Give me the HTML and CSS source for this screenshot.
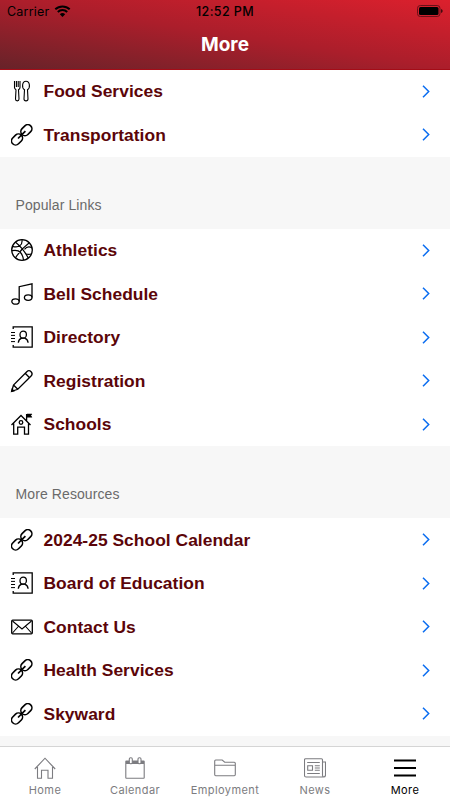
FILE: index.html
```html
<!DOCTYPE html>
<html lang="en">
<head>
    <meta charset="UTF-8">
    <meta name="viewport" content="width=device-width, initial-scale=1.0">
    <title>More</title>
    <link rel="stylesheet" href="styles.css">
</head>
<body>
    <!-- shared icons -->
    <svg class="sprite" aria-hidden="true">
        <symbol id="link" viewBox="0 0 22 22">
            <g transform="rotate(-45 10.700 10.800)" stroke-width="1.600">
                <rect x="-2" y="6.700" width="12.200" height="8.200" rx="4.100"/>
                <rect x="11.200" y="6.700" width="12.200" height="8.200" rx="4.100"/>
                <path d="M5.500 10.800h10.400" stroke-width="1.700"/>
            </g>
        </symbol>
        <symbol id="contact" viewBox="0 0 22 22">
            <path d="M2.200 3V.8h19v20.400h-19V19"/>
            <path d="M0 6.500h4M0 9.400h4M0 12.500h4M0 15.600h4" stroke-width="1"/>
            <ellipse cx="12.200" cy="8.700" rx="3.200" ry="3.500"/>
            <path d="M7.300 16.800c.3-3 1.500-4 3.400-4.600h3c1.900.6 3.100 1.600 3.400 4.600"/>
        </symbol>
        <symbol id="chevron" viewBox="0 0 8 13">
            <path d="M1 .8l5.700 5.700L1 12.200"/>
        </symbol>
    </svg>

    <header class="header">
        <div class="status">
            <div class="carrier">
                <span>Carrier</span>
                <svg class="wifi" viewBox="0 0 16 12">
                    <path d="M.8 4.300a10.500 10.500 0 0 1 14.400 0M3.300 7a6.800 6.800 0 0 1 9.400 0"/>
                    <path class="dot" d="M5.300 9.200a4 4 0 0 1 5.400 0L8 11.900z"/>
                </svg>
            </div>
            <div class="time">12:52 PM</div>
            <svg class="battery" viewBox="0 0 26 12">
                <rect class="case" x=".5" y=".5" width="22.500" height="11" rx="2.800"/>
                <rect x="2" y="2" width="19.500" height="8" rx="1.500"/>
                <path d="M24.300 4c1.600.6 1.600 3.400 0 4z"/>
            </svg>
        </div>
        <h1>More</h1>
    </header>

    <main class="list">
        <a class="row">
            <svg class="icon" viewBox="0 0 22 22">
                <path d="M3.500 1v6.500c0 1.200.8 1.700 1.500 2.300L4.500 19c0 2.500 3.500 2.500 3.500 0L7.500 9.800C8.300 9.200 9 8.700 9 7.500V1M5.400 1v6M7.200 1v6" stroke-width="1.100"/>
                <path d="M15 1.200c-4 0-4.500 7 -1.500 8.500L13 19c0 2.500 4 2.500 4 0l-.5-9.300c3-1.500 2.500-8.500-1.500-8.500z" stroke-width="1.100"/>
            </svg>
            <span>Food Services</span>
            <svg class="chevron"><use href="#chevron"/></svg>
        </a>
        <a class="row">
            <svg class="icon"><use href="#link"/></svg>
            <span>Transportation</span>
            <svg class="chevron"><use href="#chevron"/></svg>
        </a>

        <h2>Popular Links</h2>
        <a class="row">
            <svg class="icon" viewBox="0 0 22 22">
                <circle cx="11" cy="11" r="10.300"/>
                <path d="M4.500 3.200Q12 9 17.200 19M18.300 3.800Q10 10 4.500 18.800M11 .7Q11.500 5 8.800 6.800T1.500 7.300M.8 11.700Q7 10.500 9.500 13.500T12.500 21M21 8.700Q16.500 6.500 13.500 10.300M14.800 14.800Q17.500 16 20.300 15" stroke-width="1.200"/>
            </svg>
            <span>Athletics</span>
            <svg class="chevron"><use href="#chevron"/></svg>
        </a>
        <a class="row">
            <svg class="icon" viewBox="0 0 22 22">
                <path d="M8.200 18.500V3.700L21 .8v13.700"/>
                <ellipse cx="4.500" cy="18.500" rx="3.700" ry="2.700"/>
                <ellipse cx="17.200" cy="14.600" rx="3.800" ry="2.800"/>
            </svg>
            <span>Bell Schedule</span>
            <svg class="chevron"><use href="#chevron"/></svg>
        </a>
        <a class="row">
            <svg class="icon"><use href="#contact"/></svg>
            <span>Directory</span>
            <svg class="chevron"><use href="#chevron"/></svg>
        </a>
        <a class="row">
            <svg class="icon" viewBox="0 0 22 22">
                <path d="M.7 21.300L2.500 15 15.800 1.700c1.500-1.500 3-1.300 4.300 0s1.500 2.800 0 4.300L6.800 19.300zM2.500 15l4.300 4.300M14.200 3.300l4.400 4.400" stroke-width="1.300"/>
                <path d="M.7 21.300l.5-2 1.500 1.500z"/>
            </svg>
            <span>Registration</span>
            <svg class="chevron"><use href="#chevron"/></svg>
        </a>
        <a class="row">
            <svg class="icon" viewBox="0 0 22 22">
                <path d="M.5 12L10 2.500l9.500 9.500M2.700 10.500v10.700h4v-7h6.800v7h4V10.500M15.600 7.500V1"/>
                <circle cx="10" cy="9.500" r="1.800"/>
                <path class="solid" d="M16 1h5l-1.200 1.500L21 4.200h-5z" stroke-width=".5"/>
            </svg>
            <span>Schools</span>
            <svg class="chevron"><use href="#chevron"/></svg>
        </a>

        <h2>More Resources</h2>
        <a class="row">
            <svg class="icon"><use href="#link"/></svg>
            <span>2024-25 School Calendar</span>
            <svg class="chevron"><use href="#chevron"/></svg>
        </a>
        <a class="row">
            <svg class="icon"><use href="#contact"/></svg>
            <span>Board of Education</span>
            <svg class="chevron"><use href="#chevron"/></svg>
        </a>
        <a class="row">
            <svg class="icon" viewBox="0 0 22 22">
                <rect x=".7" y="4.200" width="20.600" height="13.600" rx="1"/>
                <path d="M1.500 5l9.500 8 9.500-8M1.500 17l5.800-6.500M20.500 17l-5.800-6.500" stroke-width="1.100"/>
            </svg>
            <span>Contact Us</span>
            <svg class="chevron"><use href="#chevron"/></svg>
        </a>
        <a class="row">
            <svg class="icon"><use href="#link"/></svg>
            <span>Health Services</span>
            <svg class="chevron"><use href="#chevron"/></svg>
        </a>
        <a class="row">
            <svg class="icon"><use href="#link"/></svg>
            <span>Skyward</span>
            <svg class="chevron"><use href="#chevron"/></svg>
        </a>
    </main>

    <nav class="tabs">
        <a class="tab">
            <svg viewBox="0 0 22 22">
                <path d="M.8 12L11 1.200 21.200 12M3.500 10v11.200h4v-8h6.500v8h4.500V10"/>
            </svg>
            <span>Home</span>
        </a>
        <a class="tab">
            <svg viewBox="0 0 22 22">
                <rect x="1.800" y="4" width="18.400" height="17.200" rx=".5"/>
                <path d="M2 5.500h18" stroke-width="3"/>
                <rect class="ring" x="5.300" y=".8" width="3" height="6" rx="1.300"/>
                <rect class="ring" x="14" y=".8" width="3" height="6" rx="1.300"/>
            </svg>
            <span>Calendar</span>
        </a>
        <a class="tab">
            <svg viewBox="0 0 22 22">
                <path d="M.7 17.500V4q0-1 1-1h6.500l2.500 2.200h9.600q1 0 1 1v11.300q0 1.200-1 1.200H1.700q-1 0-1-1.200zM.7 8.300h20.600"/>
            </svg>
            <span>Employment</span>
        </a>
        <a class="tab">
            <svg viewBox="0 0 22 22">
                <path d="M18.500 18.500V2.700q0-1-1-1h-16q-1 0-1 1v15.800q0 1.500 1.500 1.500h17.500q2 0 2-2V5h-3M18.500 18q0 2 1.300 2"/>
                <path d="M3.200 5.500h12.600M10.800 8.700h5M10.800 11h5M10.800 13.300h5M3.200 16.500h12.600M3.700 8.700h4.800v4.600H3.700z"/>
            </svg>
            <span>News</span>
        </a>
        <a class="tab active">
            <svg viewBox="0 0 22 22">
                <path d="M0 3.500h22M0 11h22M0 18.500h22"/>
            </svg>
            <span>More</span>
        </a>
    </nav>
</body>
</html>
```
FILE: styles.css
```css
* {
    box-sizing: border-box;
}
body {
    display: flex;
    flex-direction: column;
    height: 800px;
    margin: 0;
    overflow: hidden;
    background: #f7f7f7;
    font-family: "Liberation Sans", Arial, sans-serif;
}
.sprite {
    display: none;
}
.header {
    height: 69.5px;
    flex: none;
    background: linear-gradient(to top right, #672329, #ab1e2b 50%, #dc202d);
    border-bottom: 1px solid #a50c17;
}
.status {
    display: grid;
    grid-template-columns: 1fr auto 1fr;
    align-items: center;
    height: 22px;
    padding: 0 7px 0 7px;
    font: 12.5px Inter, sans-serif;
    color: #000;
}
.carrier {
    display: flex;
    align-items: center;
    gap: 5px;
    letter-spacing: 0.2px;
}
.wifi {
    width: 17px;
    height: 12px;
    fill: none;
    stroke: #000;
    stroke-width: 2;
}
.wifi .dot {
    fill: #000;
    stroke: none;
}
.time {
    font-weight: 500;
    letter-spacing: 0.4px;
}
.battery {
    width: 26px;
    height: 12px;
    justify-self: end;
}
.battery .case {
    fill: none;
    stroke: #6b1018;
}
h1 {
    margin: 9px 0 0;
    font: 700 19px/28px Inter, sans-serif;
    text-align: center;
    color: #fff;
}
.list {
    flex: 1;
    min-height: 0;
    overflow: hidden;
}
.row {
    display: flex;
    align-items: center;
    height: 43.5px;
    padding: 0 20px 0 11px;
    background: #fff;
    color: #5b0509;
    font-size: 17.4px;
    font-weight: bold;
    letter-spacing: 0.04px;
}
.row span {
    flex: 1;
    margin-left: 10.5px;
    padding-top: 1px;
}
.icon {
    width: 22px;
    height: 22px;
    overflow: visible;
    fill: none;
    stroke: #000;
    stroke-width: 1.3;
}
.icon .solid {
    fill: #000;
}
.chevron {
    width: 8px;
    height: 13px;
    fill: none;
    stroke: #0a6df0;
    stroke-width: 1.5;
}
h2 {
    height: 72px;
    margin: 0;
    padding: 38px 15.5px 0;
    font-size: 14px;
    font-weight: normal;
    line-height: 20px;
    letter-spacing: 0.1px;
    color: #6a6a6a;
}
.tabs {
    display: grid;
    grid-template-columns: repeat(5, 1fr);
    flex: none;
    height: 54px;
    background: #fff;
    border-top: 1px solid #d5d5d5;
}
.tab {
    display: flex;
    flex-direction: column;
    align-items: center;
    padding-top: 10px;
    font: 11px/14px Inter, sans-serif;
    letter-spacing: 0.4px;
    color: #7c7c80;
}
.tab svg {
    width: 22px;
    height: 22px;
    margin-bottom: 4px;
    fill: none;
    stroke: currentColor;
    stroke-width: 1.1;
}
.tab .ring {
    fill: #fff;
}
.tab.active {
    color: #000;
}
.tab.active svg {
    stroke-width: 1.8;
}
```
